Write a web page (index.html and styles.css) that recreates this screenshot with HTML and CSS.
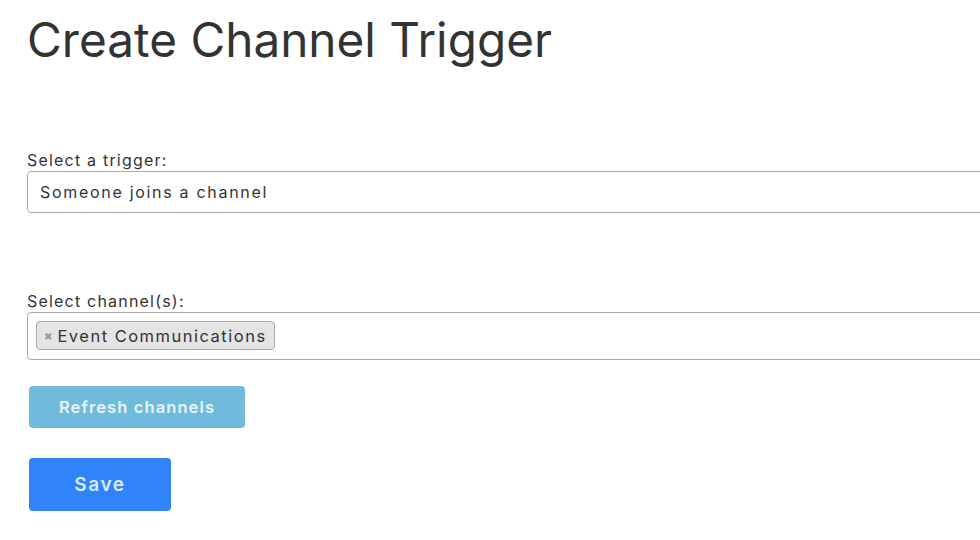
FILE: index.html
```html
<!DOCTYPE html>
<html lang="en">
<head>
<meta charset="utf-8">
<title>Create Channel Trigger</title>
<link rel="stylesheet" href="styles.css">
</head>
<body>
<main class="page">
  <h1 class="title">Create Channel Trigger</h1>
  <form class="form">
    <div class="field field-trigger">
      <label class="label">Select a trigger:</label>
      <div class="select">Someone joins a channel</div>
    </div>
    <div class="field field-channels">
      <label class="label">Select channel(s):</label>
      <div class="multi">
        <span class="tag"><span class="tag-x">&#x2716;</span>Event Communications</span>
      </div>
    </div>
    <button type="button" class="btn btn-refresh">Refresh channels</button>
    <button type="button" class="btn btn-save">Save</button>
  </form>
</main>
</body>
</html>
```
FILE: styles.css
```css
html, body {
  margin: 0;
  padding: 0;
  background: #ffffff;
  overflow: hidden;
}
body {
  font-family: Inter, "DejaVu Sans", sans-serif;
  color: #333333;
}
.page {
  padding: 10px 0 0 27px;
}
.title {
  margin: 0;
  font-size: 47.7px;
  font-weight: 400;
  line-height: 60px;
  color: #333333;
}
.form {
  display: flex;
  flex-direction: column;
  align-items: flex-start;
  margin-top: 80px;
}
.field {
  width: 1000px;
  display: flex;
  flex-direction: column;
}
.field-channels {
  margin-top: 78px;
}
.label {
  font-size: 16px;
  line-height: 20px;
  letter-spacing: 1.2px;
  margin-bottom: 1px;
}
.select {
  box-sizing: border-box;
  height: 42px;
  border: 1px solid #aaaaaa;
  border-radius: 4px;
  padding: 0 12px;
  display: flex;
  align-items: center;
  font-size: 16px;
  letter-spacing: 1.7px;
}
.multi {
  box-sizing: border-box;
  height: 48px;
  border: 1px solid #aaaaaa;
  border-radius: 4px;
  padding: 8px 8px;
  display: flex;
  align-items: flex-start;
}
.tag {
  box-sizing: border-box;
  height: 29px;
  display: inline-flex;
  align-items: center;
  background: #e4e4e4;
  border: 1px solid #aaaaaa;
  border-radius: 4px;
  padding: 0 7px 0 7px;
  font-size: 16.5px;
  letter-spacing: 1.5px;
  color: #333333;
}
.tag-x {
  font-size: 10px;
  color: #999999;
  margin-right: 5px;
  letter-spacing: 0;
}
.btn {
  border: none;
  border-radius: 4px;
  color: #ffffff;
  font-family: inherit;
  font-weight: 600;
  cursor: pointer;
  margin-left: 2px;
  padding: 0;
}
.btn-refresh {
  margin-top: 26px;
  width: 216px;
  height: 42px;
  background: #70bbdb;
  color: #e6f4fa;
  font-size: 16.5px;
  letter-spacing: 1.1px;
}
.btn-save {
  margin-top: 30px;
  width: 142px;
  height: 53px;
  background: #3083f8;
  color: #dceaff;
  font-size: 19px;
  letter-spacing: 1.6px;
}
```
